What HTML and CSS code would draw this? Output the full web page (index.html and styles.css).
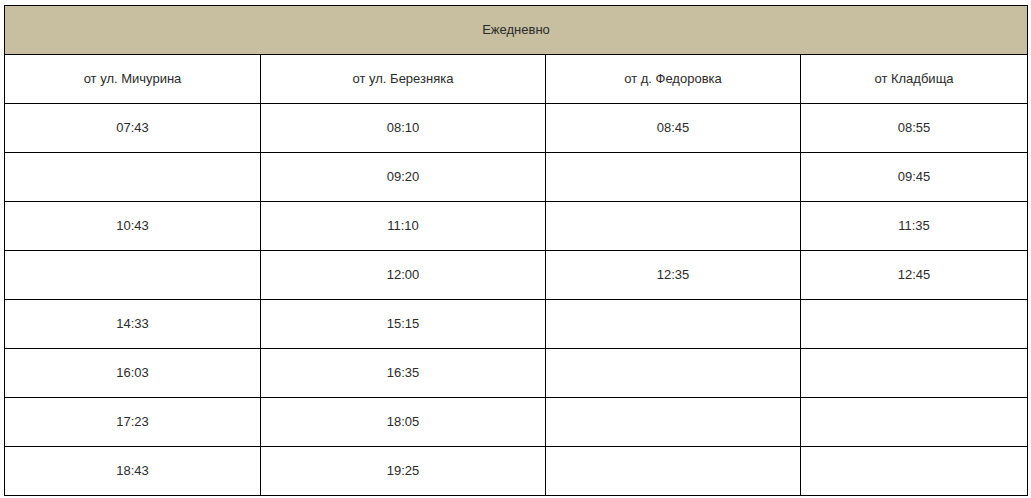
FILE: index.html
```html
<!DOCTYPE html>
<html lang="ru">
<head>
<meta charset="utf-8">
<link rel="stylesheet" href="styles.css">
</head>
<body>
<table class="schedule">
  <colgroup>
    <col class="c1"><col class="c2"><col class="c3"><col class="c4">
  </colgroup>
  <tr class="title"><td colspan="4">Ежедневно</td></tr>
  <tr><td>от ул. Мичурина</td><td>от ул. Березняка</td><td>от д. Федоровка</td><td>от Кладбища</td></tr>
  <tr><td>07:43</td><td>08:10</td><td>08:45</td><td>08:55</td></tr>
  <tr><td></td><td>09:20</td><td></td><td>09:45</td></tr>
  <tr><td>10:43</td><td>11:10</td><td></td><td>11:35</td></tr>
  <tr><td></td><td>12:00</td><td>12:35</td><td>12:45</td></tr>
  <tr><td>14:33</td><td>15:15</td><td></td><td></td></tr>
  <tr><td>16:03</td><td>16:35</td><td></td><td></td></tr>
  <tr><td>17:23</td><td>18:05</td><td></td><td></td></tr>
  <tr><td>18:43</td><td>19:25</td><td></td><td></td></tr>
</table>
</body>
</html>
```
FILE: styles.css
```css
html, body {
  margin: 0;
  padding: 0;
  background: #fff;
}
body {
  padding: 5px 0 0 4px;
}
.schedule {
  border-collapse: collapse;
  table-layout: fixed;
  width: 1023px;
  font-family: "Liberation Sans", Arial, sans-serif;
  font-size: 13px;
  color: #2b2b2b;
}
.c1 { width: 256px; }
.c2 { width: 285px; }
.c3 { width: 255px; }
.c4 { width: 227px; }
.schedule td {
  border: 1px solid #000;
  height: 46px;
  padding: 0 0 2px;
  text-align: center;
  vertical-align: middle;
}
.title td {
  background: #c8bfa0;
}
```
